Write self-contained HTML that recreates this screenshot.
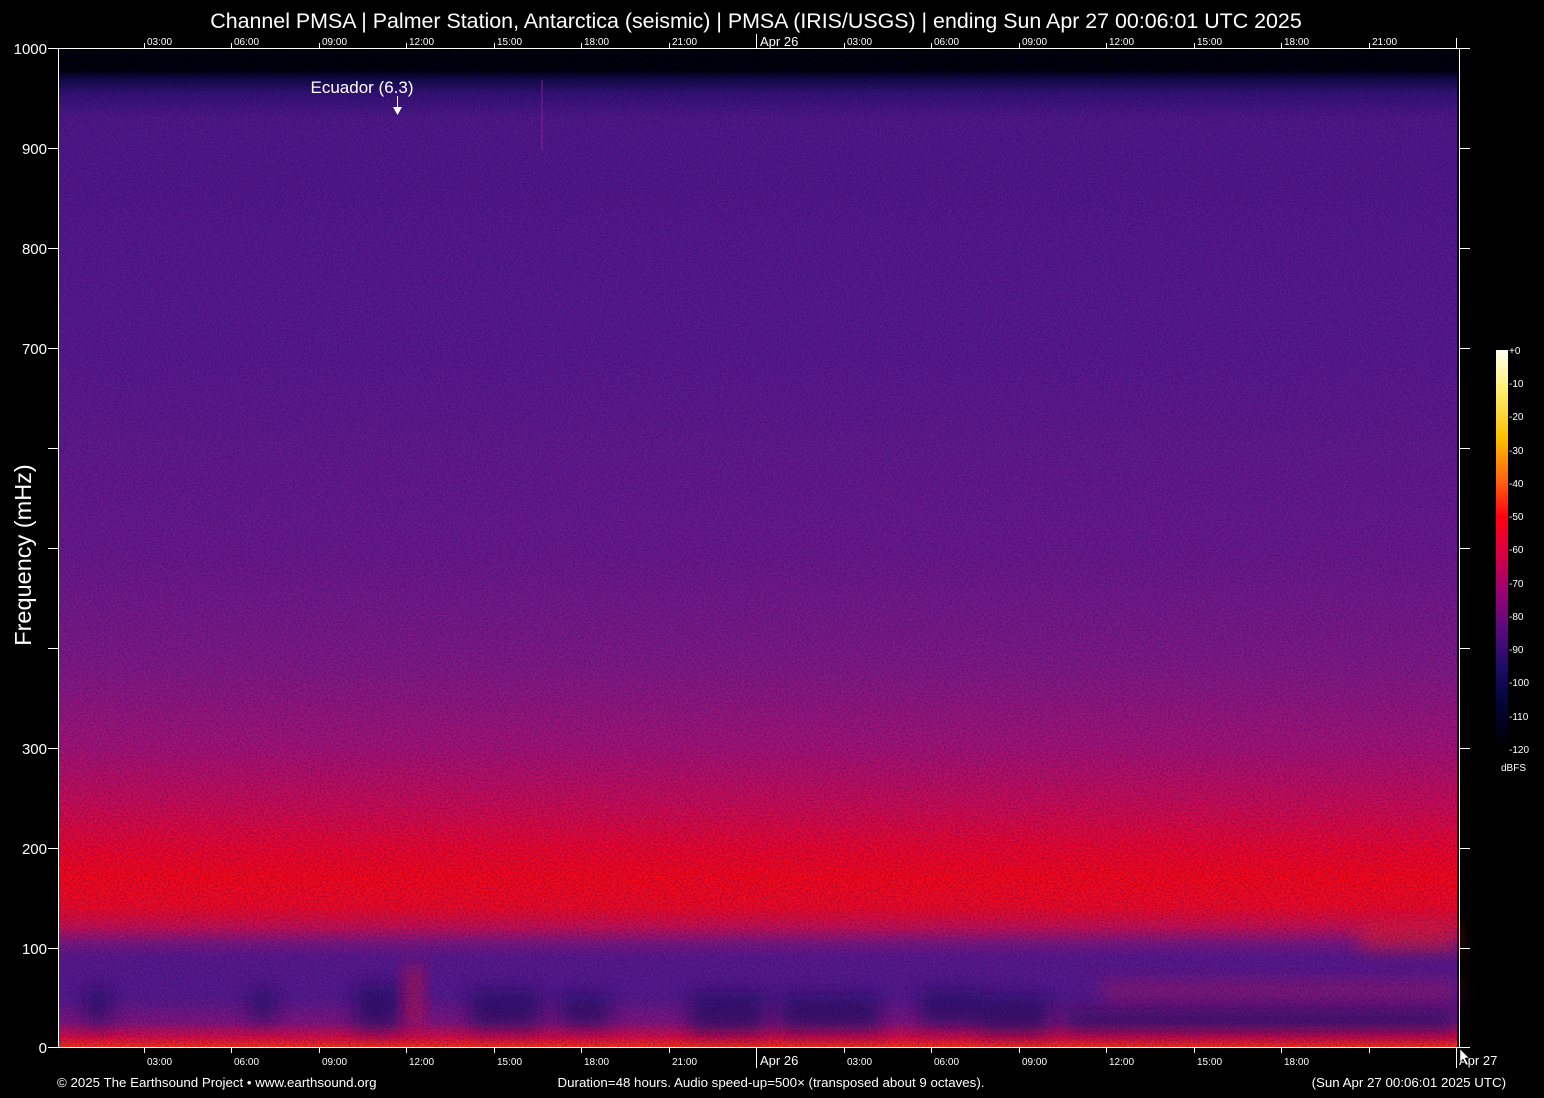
<!DOCTYPE html>
<html><head><meta charset="utf-8"><style>
html,body{margin:0;padding:0;background:#000;}
svg{display:block}
text{font-family:"Liberation Sans",sans-serif;fill:#fff}
</style></head><body>
<svg width="1544" height="1098" viewBox="0 0 1544 1098" xmlns="http://www.w3.org/2000/svg">
<defs>
<linearGradient id="spec" x1="0" y1="48" x2="0" y2="1047" gradientUnits="userSpaceOnUse">
<stop offset="0" stop-color="#000"/>
<stop offset="0.022" stop-color="#000"/>
<stop offset="0.03" stop-color="#100a3a"/>
<stop offset="0.045" stop-color="#34126e"/>
<stop offset="0.07" stop-color="#521882"/>
<stop offset="0.3" stop-color="#5c1a88"/>
<stop offset="0.5" stop-color="#6c1a86"/>
<stop offset="0.62" stop-color="#841a80"/>
<stop offset="0.7" stop-color="#a81470"/>
<stop offset="0.76" stop-color="#d00c4c"/>
<stop offset="0.8" stop-color="#ee0628"/>
<stop offset="0.83" stop-color="#fa0814"/>
<stop offset="0.86" stop-color="#f20a20"/>
<stop offset="0.88" stop-color="#c8104c"/>
<stop offset="0.895" stop-color="#821878"/>
<stop offset="0.91" stop-color="#5c1a86"/>
<stop offset="0.95" stop-color="#581a86"/>
<stop offset="0.975" stop-color="#821678"/>
<stop offset="0.99" stop-color="#d80c40"/>
<stop offset="1" stop-color="#f83010"/>
</linearGradient>
<linearGradient id="cbar" x1="0" y1="0" x2="0" y2="1">
<stop offset="0" stop-color="#fffff0"/>
<stop offset="0.1" stop-color="#fff070"/>
<stop offset="0.22" stop-color="#ffc000"/>
<stop offset="0.33" stop-color="#ff6010"/>
<stop offset="0.42" stop-color="#ff0010"/>
<stop offset="0.5" stop-color="#e0003c"/>
<stop offset="0.6" stop-color="#a00070"/>
<stop offset="0.7" stop-color="#5a0a80"/>
<stop offset="0.8" stop-color="#1a0c66"/>
<stop offset="0.88" stop-color="#04043a"/>
<stop offset="1" stop-color="#000"/>
</linearGradient>
<filter id="noise" x="0" y="0" width="100%" height="100%">
<feTurbulence type="fractalNoise" baseFrequency="0.45 0.6" numOctaves="2" seed="3"/>
<feColorMatrix type="matrix" values="0 0 0 0 0  0 0 0 0 0  0 0 0 0 0.2  0 0 0 -1.6 1.05"/>
</filter>
<filter id="blur" x="-50%" y="-50%" width="200%" height="200%"><feGaussianBlur stdDeviation="9"/></filter>
</defs>
<rect width="1544" height="1098" fill="#000"/>
<rect x="59" y="48" width="1398" height="999" fill="url(#spec)"/>
<g filter="url(#blur)" opacity="0.5">
<rect x="1100" y="980" width="357" height="25" fill="#b0145c"/>
<rect x="1360" y="925" width="97" height="25" fill="#ff2010"/>
</g>
<g filter="url(#blur)" fill="#1c0c58" opacity="0.65">
<rect x="355" y="985" width="45" height="45"/>
<rect x="470" y="990" width="70" height="38"/>
<rect x="560" y="995" width="50" height="30"/>
<rect x="690" y="992" width="75" height="40"/>
<rect x="780" y="995" width="100" height="35"/>
<rect x="920" y="990" width="60" height="35"/>
<rect x="980" y="995" width="70" height="38"/>
<rect x="1065" y="1010" width="390" height="20"/>
<rect x="85" y="988" width="25" height="35"/>
<rect x="250" y="990" width="25" height="30"/>
</g>
<g filter="url(#blur)" fill="#e01030" opacity="0.6">
<rect x="405" y="965" width="18" height="60"/>
</g>
<rect x="541" y="80" width="2" height="70" fill="#8a2a8a" opacity="0.5"/>
<rect x="59" y="48" width="1398" height="999" filter="url(#noise)" opacity="0.4"/>
<g stroke="#fff" stroke-width="1" fill="none" shape-rendering="crispEdges">
<line x1="58.5" y1="48" x2="58.5" y2="1048"/>
<line x1="1459.5" y1="48" x2="1459.5" y2="1048"/>
<line x1="58" y1="48.5" x2="1470" y2="48.5"/>
<line x1="58" y1="1047.5" x2="1470" y2="1047.5"/>
<line x1="48" y1="48.5" x2="58" y2="48.5"/><line x1="48" y1="148.5" x2="58" y2="148.5"/><line x1="48" y1="248.5" x2="58" y2="248.5"/><line x1="48" y1="348.5" x2="58" y2="348.5"/><line x1="48" y1="448.5" x2="58" y2="448.5"/><line x1="48" y1="548.5" x2="58" y2="548.5"/><line x1="48" y1="648.5" x2="58" y2="648.5"/><line x1="48" y1="748.5" x2="58" y2="748.5"/><line x1="48" y1="848.5" x2="58" y2="848.5"/><line x1="48" y1="948.5" x2="58" y2="948.5"/><line x1="48" y1="1047.5" x2="58" y2="1047.5"/>
<line x1="1459" y1="148.5" x2="1470" y2="148.5"/><line x1="1459" y1="248.5" x2="1470" y2="248.5"/><line x1="1459" y1="348.5" x2="1470" y2="348.5"/><line x1="1459" y1="448.5" x2="1470" y2="448.5"/><line x1="1459" y1="548.5" x2="1470" y2="548.5"/><line x1="1459" y1="648.5" x2="1470" y2="648.5"/><line x1="1459" y1="748.5" x2="1470" y2="748.5"/><line x1="1459" y1="848.5" x2="1470" y2="848.5"/><line x1="1459" y1="948.5" x2="1470" y2="948.5"/>
<line x1="144.5" y1="43" x2="144.5" y2="48"/><line x1="231.5" y1="43" x2="231.5" y2="48"/><line x1="319.5" y1="43" x2="319.5" y2="48"/><line x1="406.5" y1="43" x2="406.5" y2="48"/><line x1="494.5" y1="43" x2="494.5" y2="48"/><line x1="581.5" y1="43" x2="581.5" y2="48"/><line x1="669.5" y1="43" x2="669.5" y2="48"/><line x1="756.5" y1="34" x2="756.5" y2="48"/><line x1="844.5" y1="43" x2="844.5" y2="48"/><line x1="931.5" y1="43" x2="931.5" y2="48"/><line x1="1019.5" y1="43" x2="1019.5" y2="48"/><line x1="1106.5" y1="43" x2="1106.5" y2="48"/><line x1="1194.5" y1="43" x2="1194.5" y2="48"/><line x1="1281.5" y1="43" x2="1281.5" y2="48"/><line x1="1369.5" y1="43" x2="1369.5" y2="48"/><line x1="1456.5" y1="38" x2="1456.5" y2="48"/>
<line x1="144.5" y1="1047" x2="144.5" y2="1053"/><line x1="231.5" y1="1047" x2="231.5" y2="1053"/><line x1="319.5" y1="1047" x2="319.5" y2="1053"/><line x1="406.5" y1="1047" x2="406.5" y2="1053"/><line x1="494.5" y1="1047" x2="494.5" y2="1053"/><line x1="581.5" y1="1047" x2="581.5" y2="1053"/><line x1="669.5" y1="1047" x2="669.5" y2="1053"/><line x1="756.5" y1="1047" x2="756.5" y2="1068"/><line x1="844.5" y1="1047" x2="844.5" y2="1053"/><line x1="931.5" y1="1047" x2="931.5" y2="1053"/><line x1="1019.5" y1="1047" x2="1019.5" y2="1053"/><line x1="1106.5" y1="1047" x2="1106.5" y2="1053"/><line x1="1194.5" y1="1047" x2="1194.5" y2="1053"/><line x1="1281.5" y1="1047" x2="1281.5" y2="1053"/><line x1="1369.5" y1="1047" x2="1369.5" y2="1053"/><line x1="1456.5" y1="1047" x2="1456.5" y2="1068"/>
</g>
<text x="756" y="28" font-size="21.4" text-anchor="middle">Channel PMSA | Palmer Station, Antarctica (seismic) | PMSA (IRIS/USGS) | ending Sun Apr 27 00:06:01 UTC 2025</text>
<g font-size="10">
<text x="147" y="45">03:00</text><text x="234" y="45">06:00</text><text x="322" y="45">09:00</text><text x="409" y="45">12:00</text><text x="497" y="45">15:00</text><text x="584" y="45">18:00</text><text x="672" y="45">21:00</text><text x="847" y="45">03:00</text><text x="934" y="45">06:00</text><text x="1022" y="45">09:00</text><text x="1109" y="45">12:00</text><text x="1197" y="45">15:00</text><text x="1284" y="45">18:00</text><text x="1372" y="45">21:00</text>
<text x="147" y="1065">03:00</text><text x="234" y="1065">06:00</text><text x="322" y="1065">09:00</text><text x="409" y="1065">12:00</text><text x="497" y="1065">15:00</text><text x="584" y="1065">18:00</text><text x="672" y="1065">21:00</text><text x="847" y="1065">03:00</text><text x="934" y="1065">06:00</text><text x="1022" y="1065">09:00</text><text x="1109" y="1065">12:00</text><text x="1197" y="1065">15:00</text><text x="1284" y="1065">18:00</text>
</g>
<text x="760" y="46" font-size="13">Apr 26</text>
<text x="760" y="1065" font-size="13">Apr 26</text>
<text x="1459" y="1065" font-size="13">Apr 27</text>
<path d="M1460 1049 L1460 1062 L1463 1059 L1466 1065 L1468 1064 L1465 1058 L1469 1058 Z" fill="#fff" stroke="#000" stroke-width="0.5"/>
<g font-size="15" text-anchor="end">
<text x="47" y="54">1000</text><text x="47" y="154">900</text><text x="47" y="254">800</text><text x="47" y="354">700</text><text x="47" y="754">300</text><text x="47" y="854">200</text><text x="47" y="954">100</text><text x="47" y="1053">0</text>
</g>
<text transform="translate(31,555) rotate(-90)" font-size="23.5" text-anchor="middle">Frequency (mHz)</text>
<text x="362" y="93" font-size="17" text-anchor="middle">Ecuador (6.3)</text>
<line x1="397.5" y1="96" x2="397.5" y2="108" stroke="#fff"/>
<path d="M393 107 L402 107 L397.5 115 Z" fill="#fff"/>
<rect x="1496" y="350" width="12" height="398" fill="url(#cbar)"/>
<g font-size="10">
<text x="1509" y="354">+0</text><text x="1509" y="387">-10</text><text x="1509" y="420">-20</text><text x="1509" y="454">-30</text><text x="1509" y="487">-40</text><text x="1509" y="520">-50</text><text x="1509" y="553">-60</text><text x="1509" y="587">-70</text><text x="1509" y="620">-80</text><text x="1509" y="653">-90</text><text x="1509" y="686">-100</text><text x="1509" y="720">-110</text><text x="1509" y="753">-120</text>
<text x="1501" y="771">dBFS</text>
</g>
<g font-size="13.3">
<text x="57" y="1087">© 2025 The Earthsound Project • www.earthsound.org</text>
<text x="771" y="1087" text-anchor="middle">Duration=48 hours. Audio speed-up=500× (transposed about 9 octaves).</text>
<text x="1506" y="1087" text-anchor="end">(Sun Apr 27 00:06:01 2025 UTC)</text>
</g>
</svg>
</body></html>
